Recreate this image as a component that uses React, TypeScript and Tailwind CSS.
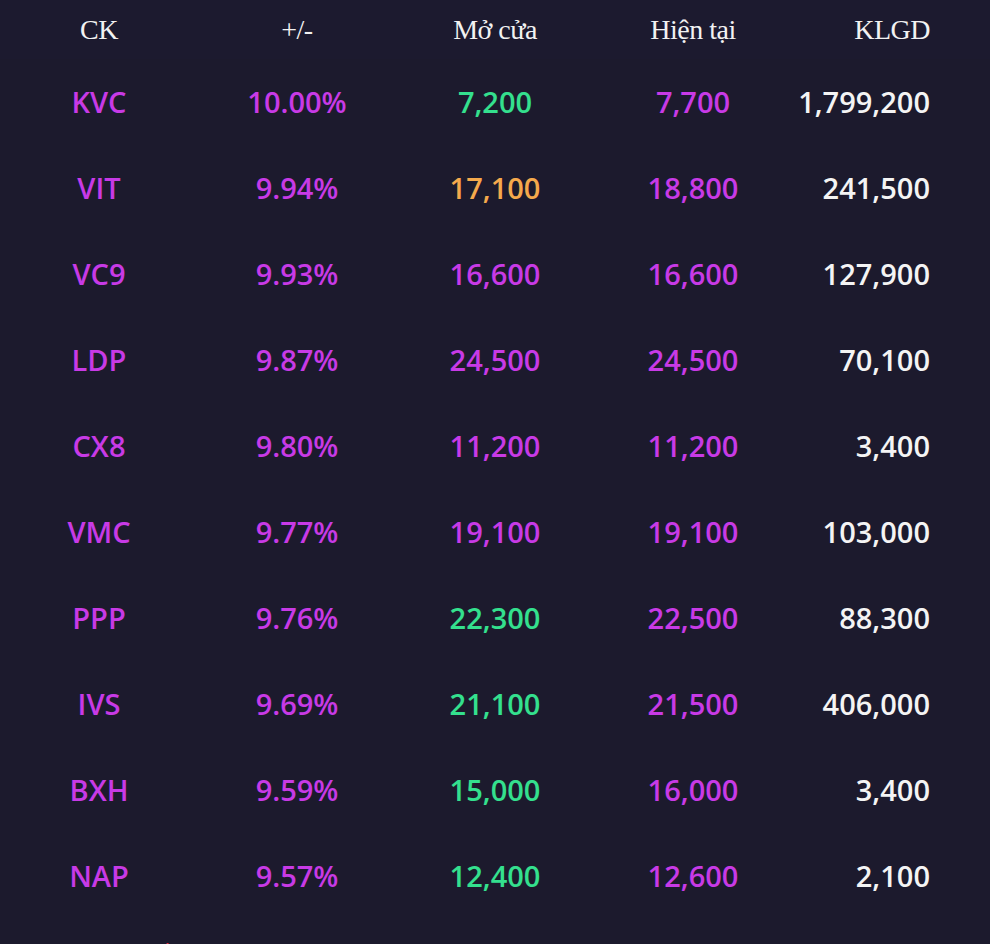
const rows = [
  { ck: "KVC", pct: "10.00%", open: "7,200", openColor: "text-[#34e08e]", cur: "7,700", vol: "1,799,200" },
  { ck: "VIT", pct: "9.94%", open: "17,100", openColor: "text-[#f5a94c]", cur: "18,800", vol: "241,500" },
  { ck: "VC9", pct: "9.93%", open: "16,600", openColor: "text-[#c83ae6]", cur: "16,600", vol: "127,900" },
  { ck: "LDP", pct: "9.87%", open: "24,500", openColor: "text-[#c83ae6]", cur: "24,500", vol: "70,100" },
  { ck: "CX8", pct: "9.80%", open: "11,200", openColor: "text-[#c83ae6]", cur: "11,200", vol: "3,400" },
  { ck: "VMC", pct: "9.77%", open: "19,100", openColor: "text-[#c83ae6]", cur: "19,100", vol: "103,000" },
  { ck: "PPP", pct: "9.76%", open: "22,300", openColor: "text-[#34e08e]", cur: "22,500", vol: "88,300" },
  { ck: "IVS", pct: "9.69%", open: "21,100", openColor: "text-[#34e08e]", cur: "21,500", vol: "406,000" },
  { ck: "BXH", pct: "9.59%", open: "15,000", openColor: "text-[#34e08e]", cur: "16,000", vol: "3,400" },
  { ck: "NAP", pct: "9.57%", open: "12,400", openColor: "text-[#34e08e]", cur: "12,600", vol: "2,100" },
];

export default function App() {
  return (
    <div className="w-[990px] h-[944px] overflow-hidden bg-[#1c1a2d]">
      {/* header */}
      <div className="grid grid-cols-5 h-[59px] items-center bg-[#1c1a2f] text-[28px] text-[#f2f2f2] font-['Liberation_Serif',serif] tracking-[-0.5px]">
        <div className="text-center">CK</div>
        <div className="text-center">+/-</div>
        <div className="text-center">Mở cửa</div>
        <div className="text-center">Hiện tại</div>
        <div className="text-right pr-[60px]">KLGD</div>
      </div>

      {rows.map((r) => (
        <div
          key={r.ck}
          className="grid grid-cols-5 h-[86px] items-center text-[29px] font-semibold font-['Open_Sans',sans-serif]"
        >
          <div className="text-center text-[#c83ae6]">{r.ck}</div>
          <div className="text-center text-[#c83ae6]">{r.pct}</div>
          <div className={"text-center " + r.openColor}>{r.open}</div>
          <div className="text-center text-[#c83ae6]">{r.cur}</div>
          <div className="text-right pr-[60px] text-[#f4f4f4]">{r.vol}</div>
        </div>
      ))}

      {/* next line, only its accents show at the bottom edge */}
      <div className="pl-[60px] pt-[17px] text-[22px] text-[#e0304a] font-['Open_Sans',sans-serif]">
        Mã tăng trần phiên hôm nay
      </div>
    </div>
  );
}
